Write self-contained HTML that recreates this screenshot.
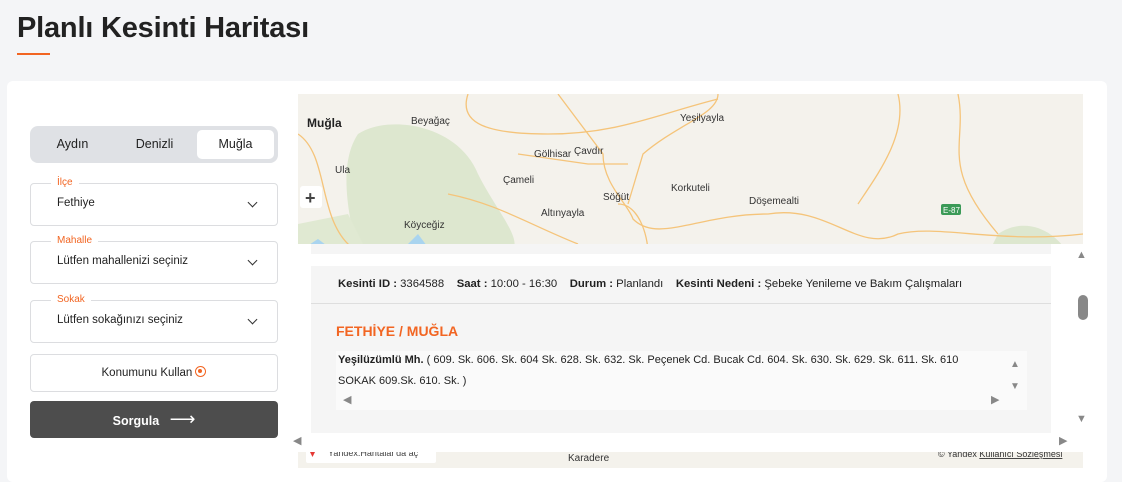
<!DOCTYPE html>
<html><head><meta charset="utf-8"><style>
*{box-sizing:border-box;margin:0;padding:0}
body{width:1122px;height:482px;background:#f4f5f7;font-family:"Liberation Sans","DejaVu Sans",sans-serif;position:relative;overflow:hidden;color:#222}
.abs{position:absolute}
h1{position:absolute;left:17px;top:12px;font-size:29px;font-weight:bold;color:#222;letter-spacing:-0.2px}
.ul{left:17px;top:53px;width:33px;height:2px;background:#f26522}
.card{left:7px;top:81px;width:1100px;height:401px;background:#fff;border-radius:6px}
.tabs{left:30px;top:126px;width:248px;height:37px;background:#dfe1e5;border-radius:8px}
.tab{position:absolute;top:0;height:37px;line-height:37px;font-size:12.5px;text-align:center;color:#222}
.tabon{left:197px;top:130px;width:77px;height:29px;background:#fff;border-radius:5px;line-height:29px;text-align:center;font-size:12.5px}
.sel{left:30px;width:248px;height:43px;border:1px solid #dcdde0;border-radius:4px;background:#fff}
.sel span{position:absolute;left:26px;top:13px;font-size:11.5px;color:#222}
.lbl{position:absolute;left:20px;top:-7px;padding:0 6px;background:#fff;font-size:10px;color:#f26522;line-height:12px}
.chev{position:absolute;right:21px;top:15px;border-right:1.8px solid #333;border-bottom:1.8px solid #333;transform:rotate(45deg);width:7px;height:7px}
.btn1{left:30px;top:354px;width:248px;height:38px;border:1px solid #dcdde0;border-radius:4px;text-align:center;line-height:37px;font-size:11.5px}
.btn2{left:30px;top:401px;width:248px;height:37px;background:#4d4d4d;border-radius:4px;text-align:center;line-height:37px;font-size:12.5px;color:#fff;font-weight:bold}
.t{font-size:11.3px;color:#222}
b{font-weight:bold}
</style></head><body>
<h1>Planlı Kesinti Haritası</h1>
<div class="abs ul"></div>
<div class="abs card"></div>
<div class="abs tabs"><div class="tab" style="left:10px;width:65px">Aydın</div><div class="tab" style="left:92px;width:65px">Denizli</div></div>
<div class="abs tabon">Muğla</div>
<div class="abs sel" style="top:183px"><div class="lbl">İlçe</div><span>Fethiye</span><div class="chev"></div></div>
<div class="abs sel" style="top:241px"><div class="lbl">Mahalle</div><span>Lütfen mahallenizi seçiniz</span><div class="chev"></div></div>
<div class="abs sel" style="top:300px"><div class="lbl">Sokak</div><span>Lütfen sokağınızı seçiniz</span><div class="chev"></div></div>
<div class="abs btn1">Konumunu Kullan <span style="display:inline-block;width:11px;height:11px;border:1.5px solid #f26522;border-radius:50%;position:relative;top:1px"><span style="position:absolute;left:2px;top:2px;width:4px;height:4px;background:#f26522;border-radius:50%"></span></span></div>
<div class="abs btn2">Sorgula &nbsp;&nbsp;<span style="font-size:18px;font-weight:normal">⟶</span></div>

<svg class="abs" style="left:298px;top:94px" width="785" height="374" viewBox="0 0 785 374" font-family="Liberation Sans, sans-serif" font-size="10" fill="#333">
<rect width="785" height="374" fill="#f4f2ec"/>
<path d="M60 40 C90 20 160 30 180 80 C200 120 230 150 210 160 L60 160 C50 120 40 70 60 40Z" fill="#dde7cf"/>
<path d="M0 130 L50 120 L70 160 L0 160Z" fill="#e0e9d2"/>
<path d="M700 140 C730 120 760 140 770 160 L690 160Z" fill="#dde7cf"/>
<path d="M0 158 L20 145 L40 160Z" fill="#a9d4ef"/>
<path d="M100 160 L120 140 L135 160Z" fill="#a9d4ef"/>
<g fill="none" stroke="#f5c47a" stroke-width="1.3">
<path d="M0 40 C30 60 20 120 50 150 C80 170 100 140 130 160"/>
<path d="M170 0 C160 30 190 40 250 40 C320 40 360 20 420 5"/>
<path d="M260 0 L305 60 C305 90 330 110 335 125 C360 150 400 120 470 120 C530 110 560 160 600 140 C640 130 700 150 785 140"/>
<path d="M420 0 C420 20 380 30 345 60 L330 110"/>
<path d="M320 110 C340 110 350 140 350 160"/>
<path d="M600 0 C610 40 580 80 560 110"/>
<path d="M660 0 C670 50 640 70 700 140"/>
<path d="M220 60 L290 70 L330 70"/>
<path d="M150 100 C200 110 230 130 280 150"/>
</g>
<text x="9" y="33" font-size="12" font-weight="bold" fill="#222">Muğla</text>
<text x="113" y="30">Beyağaç</text>
<text x="37" y="79">Ula</text>
<text x="236" y="63">Gölhisar</text>
<text x="276" y="60">Çavdır</text>
<text x="205" y="89">Çameli</text>
<text x="243" y="122">Altınyayla</text>
<text x="305" y="106">Söğüt</text>
<text x="373" y="97">Korkuteli</text>
<text x="382" y="27">Yeşilyayla</text>
<text x="451" y="110">Döşemealti</text>
<text x="106" y="134">Köyceğiz</text>
<rect x="643" y="110" width="20" height="11" rx="2" fill="#3b9a57"/>
<text x="645" y="119" font-size="8" fill="#fff">E-87</text>
<rect x="2" y="92" width="22" height="22" rx="3" fill="#fff"/>
<text x="7" y="110" font-size="18" font-weight="bold" fill="#444">+</text>
<text x="270" y="367">Karadere</text>
<rect x="8" y="352" width="130" height="17" rx="2" fill="#fff"/>
<text x="30" y="362" font-size="9" fill="#444">Yandex.Haritalar'da aç</text>
<path d="M12 354 l5 0 l0 4 l-2.5 5 l-2.5 -5z" fill="#e53935"/>
<text x="640" y="363" font-size="9" fill="#333">© Yandex <tspan text-decoration="underline">Kullanıcı Sözleşmesi</tspan></text>
</svg>

<div class="abs" style="left:290px;top:244px;width:807px;height:208px;background:#fff"></div>
<div class="abs" style="left:311px;top:244px;width:740px;height:10px;background:#f5f5f5"></div>
<div class="abs" style="left:311px;top:266px;width:740px;height:167px;background:#f5f5f5"></div>
<div class="abs" style="left:311px;top:303px;width:740px;height:1px;background:#dedede"></div>
<div class="abs t" style="left:338px;top:278px"><b>Kesinti ID :</b> 3364588 &nbsp;&nbsp; <b>Saat :</b> 10:00 - 16:30 &nbsp;&nbsp; <b>Durum :</b> Planlandı &nbsp;&nbsp; <b>Kesinti Nedeni :</b> Şebeke Yenileme ve Bakım Çalışmaları</div>
<div class="abs" style="left:336px;top:323px;font-size:14px;font-weight:bold;color:#f26522">FETHİYE / MUĞLA</div>
<div class="abs" style="left:336px;top:351px;width:691px;height:59px;background:#fafafa"></div>
<div class="abs t" style="left:338px;top:350px;width:640px;line-height:21px;font-size:11px"><b>Yeşilüzümlü Mh.</b> ( 609. Sk. 606. Sk. 604 Sk. 628. Sk. 632. Sk. Peçenek Cd. Bucak Cd. 604. Sk. 630. Sk. 629. Sk. 611. Sk. 610 SOKAK 609.Sk. 610. Sk. )</div>
<div class="abs" style="left:1010px;top:354px;font-size:10px;color:#888;line-height:22px">▲<br>▼</div>
<div class="abs" style="left:343px;top:393px;font-size:11px;color:#888">◀</div>
<div class="abs" style="left:991px;top:393px;font-size:11px;color:#888">▶</div>
<div class="abs" style="left:1076px;top:249px;font-size:11px;color:#888">▲</div>
<div class="abs" style="left:1076px;top:413px;font-size:11px;color:#888">▼</div>
<div class="abs" style="left:1078px;top:295px;width:10px;height:25px;background:#888;border-radius:5px"></div>
<div class="abs" style="left:293px;top:434px;font-size:11px;color:#888">◀</div>
<div class="abs" style="left:1059px;top:434px;font-size:11px;color:#888">▶</div>
</body></html>
